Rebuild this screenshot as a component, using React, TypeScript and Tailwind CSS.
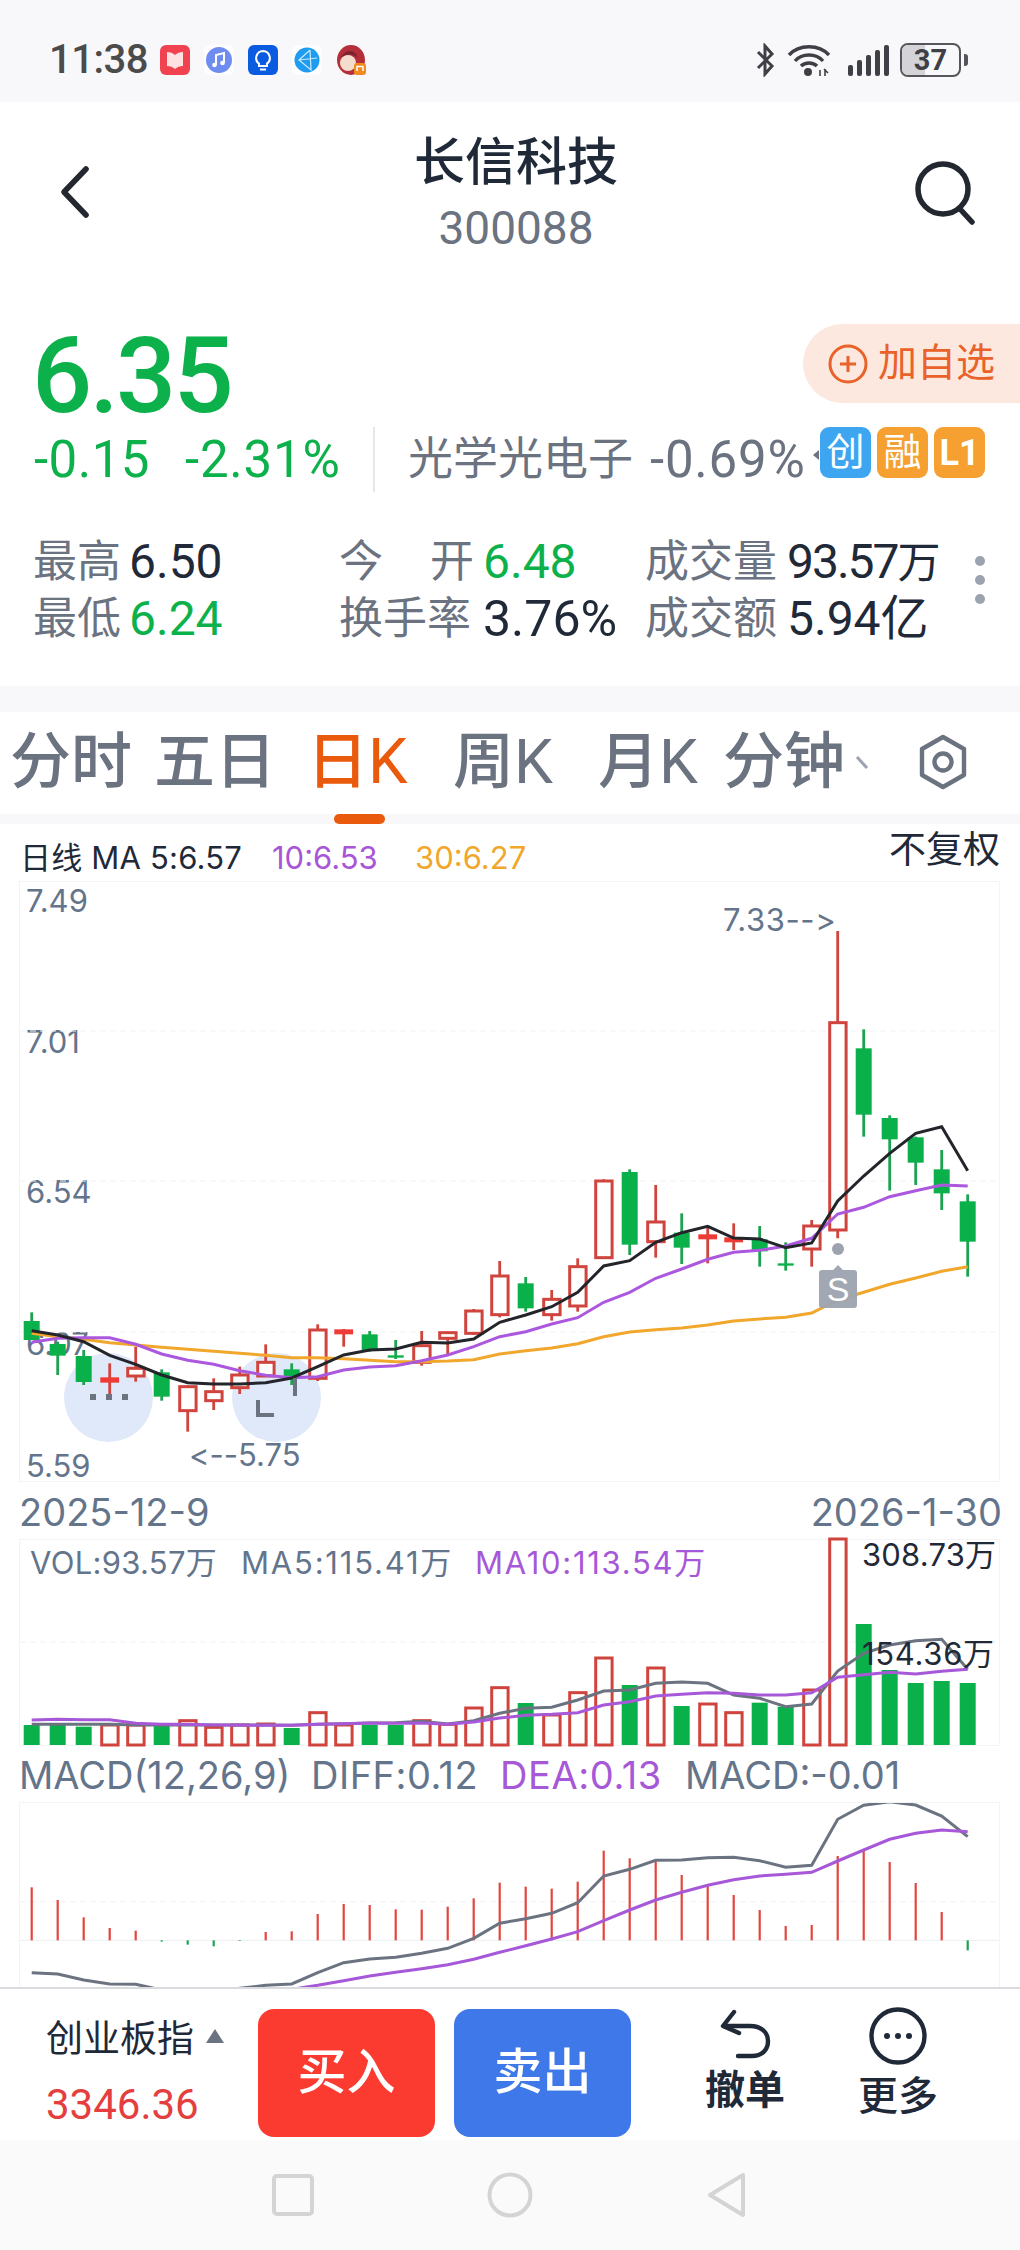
import React from 'react';

// all chart numbers are read off the screenshot, y is in "z" units: page y = base + z / 3
const kx = (i: number) => 31.7 + 26 * i;
const ky = (z: number) => 1120 + z / 3;
const vy = (z: number) => 1480 + z / 3;
const my = (z: number) => 1780 + z / 3;

type Candle = ['g' | 'h' | 'r', number, number, number, number];

const candles: Candle[] = [
  ['g', 577, 603, 660, 660],
  ['g', 665, 672, 707, 765],
  ['g', 690, 708, 786, 795],
  ['r', 730, 772, 788, 825],
  ['h', 680, 745, 768, 785],
  ['g', 748, 757, 830, 842],
  ['h', 797, 800, 872, 935],
  ['h', 775, 815, 842, 870],
  ['h', 740, 765, 803, 822],
  ['h', 673, 727, 768, 770],
  ['g', 730, 748, 770, 795],
  ['h', 613, 630, 775, 783],
  ['r', 627, 628, 643, 680],
  ['g', 633, 643, 690, 695],
  ['g', 660, 706, 713, 717],
  ['h', 633, 677, 727, 737],
  ['h', 635, 638, 655, 705],
  ['h', 567, 573, 640, 645],
  ['h', 423, 468, 584, 592],
  ['g', 471, 490, 565, 575],
  ['h', 510, 538, 584, 602],
  ['h', 415, 440, 558, 575],
  ['h', 178, 183, 413, 415],
  ['g', 148, 156, 374, 405],
  ['h', 195, 306, 365, 413],
  ['g', 280, 338, 383, 432],
  ['r', 318, 343, 358, 430],
  ['r', 310, 352, 367, 390],
  ['g', 318, 358, 394, 440],
  ['g', 367, 430, 437, 452],
  ['h', 300, 318, 387, 440],
  ['h', -567, -292, 330, 355],
  ['g', -272, -215, -16, 50],
  ['g', -14, -6, 58, 212],
  ['g', 50, 52, 128, 195],
  ['g', 90, 148, 220, 270],
  ['g', 223, 244, 365, 470],
];

const ma5 = [632, 645, 665, 706, 733, 765, 788, 792, 792, 788, 774, 740, 705, 690, 687, 667, 669, 657, 607, 585, 560, 517, 438, 422, 367, 338, 319, 354, 357, 383, 369, 243, 168, 100, 40, 20, 152];
const ma10 = [667, 655, 653, 653, 673, 702, 721, 733, 752, 766, 773, 770, 750, 741, 737, 722, 705, 680, 650, 635, 612, 593, 547, 517, 475, 447, 418, 397, 391, 378, 355, 282, 262, 230, 212, 195, 198];
const ma30 = [640, 650, 658, 668, 675, 682, 688, 694, 700, 706, 713, 713, 716, 721, 725, 725, 723, 719, 702, 692, 684, 671, 650, 636, 629, 624, 615, 603, 597, 592, 579, 540, 517, 493, 474, 454, 440];

const volTops = [735, 735, 740, 735, 735, 735, 722, 742, 735, 732, 744, 698, 735, 735, 735, 722, 733, 684, 623, 669, 705, 638, 534, 615, 564, 678, 672, 698, 668, 680, 630, 177, 432, 570, 609, 603, 609];
const volMa5 = [733, 733, 733, 733, 735, 735, 735, 735, 735, 735, 736, 733, 731, 729, 728, 724, 732, 722, 700, 685, 682, 660, 633, 630, 610, 606, 610, 645, 655, 680, 672, 573, 520, 495, 482, 478, 568];
const volMa10 = [720, 718, 719, 719, 730, 733, 733, 735, 735, 736, 736, 733, 731, 729, 730, 729, 733, 726, 714, 706, 703, 698, 675, 665, 648, 643, 638, 640, 645, 645, 638, 592, 584, 577, 582, 574, 568];

const macdBars = [322, 360, 412, 444, 452, 485, 494, 499, 483, 456, 454, 402, 372, 375, 388, 389, 380, 355, 308, 320, 326, 305, 212, 235, 245, 285, 315, 345, 390, 438, 435, 228, 212, 246, 309, 396, 511];
const diff = [578, 582, 600, 612, 613, 630, 640, 640, 625, 616, 612, 578, 548, 537, 532, 520, 505, 475, 430, 416, 400, 368, 288, 268, 241, 240, 233, 232, 242, 262, 256, 118, 76, 65, 75, 108, 170];
const dea = [700, 700, 700, 700, 700, 700, 700, 700, 690, 660, 628, 616, 602, 588, 577, 566, 554, 538, 517, 497, 477, 455, 422, 390, 360, 337, 316, 299, 288, 283, 277, 243, 210, 178, 160, 150, 155];

const line = (vals: number[], toY: (z: number) => number) =>
  vals.map((v, i) => `${kx(i).toFixed(1)},${toY(v).toFixed(1)}`).join(' ');

function StatusIcons() {
  return (
    <div className="flex items-center gap-[14px] ml-[12px]">
      <svg width="30" height="30" viewBox="0 0 30 30">
        <rect width="30" height="30" rx="6" fill="#f1434f" />
        <path d="M7 7 C10 7 13 8 15 10 C17 8 20 7 23 7 V21 C20 21 17 22 15 24 C13 22 10 21 7 21 Z" fill="#fde2e2" />
      </svg>
      <svg width="30" height="30" viewBox="0 0 30 30">
        <rect width="30" height="30" rx="6" fill="#fdfdff" />
        <circle cx="15" cy="15" r="13" fill="#6f8df0" />
        <path d="M12 20 V10 L20 8 V18" fill="none" stroke="#fff" strokeWidth="2" />
        <circle cx="10.5" cy="20" r="2.3" fill="#fff" />
        <circle cx="18.5" cy="18" r="2.3" fill="#fff" />
      </svg>
      <svg width="30" height="30" viewBox="0 0 30 30">
        <rect width="30" height="30" rx="6" fill="#0a5be0" />
        <path d="M15 6 a7 7 0 0 1 4 12.6 V21 h-8 v-2.4 A7 7 0 0 1 15 6 Z" fill="none" stroke="#fff" strokeWidth="2" />
        <path d="M12 24.5 h6" stroke="#fff" strokeWidth="2" />
      </svg>
      <svg width="30" height="30" viewBox="0 0 30 30">
        <rect width="30" height="30" rx="6" fill="#fdfdff" />
        <circle cx="15" cy="15" r="12.5" fill="#1e9df0" />
        <path d="M18 5 L7 15 L19 25 L18 5 M7 15 L25 13" fill="none" stroke="#cdeafc" strokeWidth="1.2" />
      </svg>
      <svg width="30" height="30" viewBox="0 0 30 30">
        <ellipse cx="15" cy="15" rx="14" ry="15" fill="#b52f3a" />
        <ellipse cx="12" cy="18" rx="8" ry="8" fill="#f4dccf" />
        <path d="M4 14 C8 8 18 8 22 14 L20 9 C16 4 8 5 4 14 Z" fill="#7a2430" />
        <rect x="18" y="18" width="12" height="12" rx="3" fill="#f28a1e" />
        <path d="M21 26 V21.5 H27 V26" fill="none" stroke="#fff" strokeWidth="1.5" />
      </svg>
    </div>
  );
}

function StatusRight() {
  return (
    <div className="flex items-center mr-[52px]">
      <svg width="24" height="34" viewBox="0 0 24 34" className="mr-[9px]">
        <path d="M4 9 L18 23 L11 31 V3 L18 11 L4 25" fill="none" stroke="#3f3f46" strokeWidth="3" />
      </svg>
      <svg width="44" height="34" viewBox="0 0 44 34" className="mr-[16px]">
        <path d="M2 12 C12 1 32 1 42 12" fill="none" stroke="#3f3f46" strokeWidth="3.4" />
        <path d="M8 18 C15 10 29 10 36 18" fill="none" stroke="#3f3f46" strokeWidth="3.4" />
        <path d="M14 23 C18 19 26 19 30 23" fill="none" stroke="#3f3f46" strokeWidth="3.4" />
        <circle cx="21" cy="29" r="4" fill="#3f3f46" />
        <path d="M33 27 V33 M38 33 V26 M37 26 L41 30" stroke="#3f3f46" strokeWidth="1.6" fill="none" />
      </svg>
      <svg width="42" height="34" viewBox="0 0 42 34" className="mr-[11px]">
        {[0, 1, 2, 3, 4].map((b) => (
          <rect key={b} x={1 + b * 9} y={22 - b * 5} width="5" height={11 + b * 5} rx="2" fill="#3f3f46" />
        ))}
      </svg>
      <div className="relative w-[61px] h-[34px] rounded-[8px] border-[2.5px] border-[#55555b] overflow-hidden flex items-center justify-center">
        <div className="absolute left-0 top-0 bottom-0 w-[23px] bg-[#d4d4d8]" />
        <span className="relative text-[29px] leading-none font-bold text-[#3f3f46]">37</span>
      </div>
      <div className="w-[4px] h-[12px] rounded-r-[3px] bg-[#55555b] ml-[3px]" />
    </div>
  );
}

function PageHeader() {
  return (
    <div className="relative h-[222px] bg-white">
      <svg width="34" height="56" viewBox="0 0 34 56" className="absolute left-[58px] top-[62px]">
        <path d="M28 5 L6 28 L28 51" fill="none" stroke="#23272f" strokeWidth="5.6" strokeLinecap="round" strokeLinejoin="round" />
      </svg>
      <div className="flex flex-col items-center pt-[32px]">
        <div className="text-[51px] leading-[58px] font-medium text-[#1f2937] ml-[12px]">长信科技</div>
        <div className="text-[46px] leading-[54px] mt-[9px] text-[#6b7280] ml-[12px]">300088</div>
      </div>
      <svg width="64" height="68" viewBox="0 0 64 68" className="absolute left-[913px] top-[55px]">
        <circle cx="30" cy="32" r="25" fill="none" stroke="#23272f" strokeWidth="5.5" />
        <path d="M47 52 L59 65" stroke="#23272f" strokeWidth="5.5" strokeLinecap="round" />
      </svg>
    </div>
  );
}

function Quote() {
  return (
    <div className="bg-white h-[362px]">
      <div className="h-[92px] flex items-start justify-between">
        <div className="ml-[32px] mt-[2px] text-[106px] leading-[100px] font-medium tracking-[-2.8px] text-[#0cb14b]">6.35</div>
        <div className="w-[217px] h-[79px] rounded-l-[40px] bg-[#fde8df] flex items-center pl-[25px]">
          <svg width="40" height="40" viewBox="0 0 40 40">
            <circle cx="20" cy="20" r="18" fill="none" stroke="#e8622a" strokeWidth="3" />
            <path d="M12 20 H28 M20 12 V28" stroke="#e8622a" strokeWidth="3" />
          </svg>
          <span className="ml-[10px] text-[39px] leading-none text-[#e8622a]">加自选</span>
        </div>
      </div>
      <div className="mt-[11px] h-[65px] flex items-center">
        <span className="ml-[34px] w-[151px] text-[51px] leading-none tracking-[0.5px] text-[#0cb14b]">-0.15</span>
        <span className="w-[188px] text-[51px] leading-none tracking-[0.8px] text-[#0cb14b]">-2.31%</span>
        <div className="w-[2px] h-[65px] bg-[#e5e7eb]" />
        <span className="ml-[33px] w-[242px] text-[45px] leading-none text-[#6b7280] whitespace-nowrap">光学光电子</span>
        <span className="w-[161px] text-[51px] leading-none tracking-[0.8px] text-[#6b7280] whitespace-nowrap">-0.69%</span>
        <svg width="9" height="12" viewBox="0 0 9 12" className="-mt-[10px]"><path d="M8 1 L2 6 L8 11 Z" fill="#6b7280" /></svg>
        <div className="flex gap-[6px] h-[51px] -mt-[14px]">
          <span className="w-[51px] rounded-[9px] bg-[#3ea6f0] text-white text-[38px] flex items-center justify-center">创</span>
          <span className="w-[51px] rounded-[9px] bg-[#f5a030] text-white text-[38px] flex items-center justify-center">融</span>
          <span className="w-[51px] rounded-[9px] bg-[#f5a030] text-white text-[36px] font-bold flex items-center justify-center">L1</span>
        </div>
      </div>
      <div className="relative mt-[42px] text-[44px] leading-[56px] text-[#6b7280]">
        <div className="flex">
          <span className="ml-[33px] w-[96px]">最高</span>
          <span className="w-[210px] text-[48px] text-[#1f2937]">6.50</span>
          <span className="w-[144px] flex justify-between pr-[9px]"><span>今</span><span>开</span></span>
          <span className="w-[162px] text-[48px] text-[#0cb14b]">6.48</span>
          <span className="w-[142px]">成交量</span>
          <span className="text-[48px] text-[#1f2937] tracking-[-2px]">93.57<span className="text-[43px] tracking-normal">万</span></span>
        </div>
        <div className="flex">
          <span className="ml-[33px] w-[96px]">最低</span>
          <span className="w-[210px] text-[48px] text-[#0cb14b]">6.24</span>
          <span className="w-[144px]">换手率</span>
          <span className="w-[162px] text-[50px] text-[#1f2937]">3.76%</span>
          <span className="w-[142px]">成交额</span>
          <span className="text-[48px] text-[#1f2937]">5.94亿</span>
        </div>
        <div className="absolute left-[975px] top-[22px] flex flex-col gap-[9px]">
          <div className="w-[10px] h-[10px] rounded-full bg-[#9ca3af]" />
          <div className="w-[10px] h-[10px] rounded-full bg-[#9ca3af]" />
          <div className="w-[10px] h-[10px] rounded-full bg-[#9ca3af]" />
        </div>
      </div>
    </div>
  );
}

function Tabs() {
  const cls = 'absolute top-[14px] text-[61px] leading-[72px] text-[#6b7280] font-medium whitespace-nowrap';
  return (
    <div className="relative h-[102px] bg-white overflow-hidden">
      <span className={`${cls} left-[10px]`}>分时</span>
      <span className={`${cls} left-[154px]`}>五日</span>
      <span className={`${cls} left-[307px] text-[#ea5a0c]`}>日<span className="font-normal text-[63px]">K</span></span>
      <span className={`${cls} left-[453px]`}>周<span className="font-normal text-[62px]">K</span></span>
      <span className={`${cls} left-[598px]`}>月<span className="font-normal text-[62px]">K</span></span>
      <span className={`${cls} left-[723px]`}>分钟</span>
      <svg width="14" height="18" viewBox="0 0 14 18" className="absolute left-[855px] top-[42px]">
        <path d="M2 3 L12 14" stroke="#9ca3af" strokeWidth="3" />
      </svg>
      <svg width="52" height="56" viewBox="0 0 52 56" className="absolute left-[917px] top-[22px]">
        <path d="M26 3 L47 15 V41 L26 53 L5 41 V15 Z" fill="none" stroke="#6b7280" strokeWidth="4.4" strokeLinejoin="round" />
        <circle cx="26" cy="28" r="8.5" fill="none" stroke="#6b7280" strokeWidth="4.4" />
      </svg>
    </div>
  );
}

function KChart() {
  const label = 'absolute left-[6px] text-[31px] leading-[34px] text-[#64748b]';
  return (
    <div className="relative ml-[19px] w-[981px] h-[601px] border border-[#f3f4f6] font-['Inter','Noto_Sans_CJK_SC',sans-serif] [font-feature-settings:'calt'_0,'liga'_0]">
      {/* hint bubbles and axis labels sit under the candles */}
      <div className="absolute left-[44px] top-[471px] w-[89px] h-[89px] rounded-full bg-[#dfe9fa]" />
      <div className="absolute left-[212px] top-[471px] w-[89px] h-[89px] rounded-full bg-[#dfe9fa]" />
      <span className={`${label} top-[2px]`}>7.49</span>
      <span className={`${label} top-[143px]`}>7.01</span>
      <span className={`${label} top-[293px]`}>6.54</span>
      <span className={`${label} top-[445px]`}>6.07</span>
      <span className={`${label} top-[567px]`}>5.59</span>
      <svg width="979" height="599" viewBox="20 882 979 599" className="absolute left-0 top-0 overflow-visible">
        {[1031, 1181, 1332].map((y) => (
          <line key={y} x1="20" x2="1000" y1={y} y2={y} stroke="#f1f2f4" strokeWidth="1" strokeDasharray="6 4" />
        ))}
        {candles.map(([t, wt, bt, bb, wb], i) => {
          const x = kx(i);
          const wick = t === 'g' ? '#1ca34f' : '#d0443e';
          return (
            <g key={i}>
              <line x1={x} x2={x} y1={ky(wt)} y2={ky(wb)} stroke={wick} strokeWidth="2.8" />
              {t === 'h' ? (
                <rect x={x - 8} y={ky(bt)} width="16.4" height={ky(bb) - ky(bt)} fill="#fff" stroke="#d0443e" strokeWidth="3" />
              ) : (
                <rect x={x - (t === 'g' ? 8 : 9.4)} y={ky(bt)} width={t === 'g' ? 16 : 18.8} height={ky(bb) - ky(bt)} fill={t === 'g' ? '#0ab14a' : '#ef3b35'} />
              )}
            </g>
          );
        })}
        <polyline points={line(ma30, ky)} fill="none" stroke="#f0a72c" strokeWidth="3" />
        <polyline points={line(ma10, ky)} fill="none" stroke="#ab58de" strokeWidth="3" />
        <polyline points={line(ma5, ky)} fill="none" stroke="#23252b" strokeWidth="3" />
        <path d="M819 1273 a3 3 0 0 1 3 -3 h11 l5 -5 l5 5 h11 a3 3 0 0 1 3 3 v32 a3 3 0 0 1 -3 3 h-32 a3 3 0 0 1 -3 -3 Z" fill="#9ca3af" fillOpacity="0.95" />
        <circle cx="838" cy="1249" r="6" fill="#9ca3af" />
        <path d="M90 1394 h6 v6 h-6 Z M106 1394 h6 v6 h-6 Z M122 1394 h6 v6 h-6 Z" fill="#6b7280" />
        <path d="M258 1400 V1415 H274 M295 1378 V1396" fill="none" stroke="#6b7280" strokeWidth="4" />
      </svg>
      <span className="absolute left-[703px] top-[21px] text-[31px] leading-[34px] tracking-[0.6px] text-[#64748b] whitespace-nowrap">7.33--&gt;</span>
      <span className="absolute left-[169px] top-[556px] text-[31px] leading-[34px] text-[#64748b] whitespace-nowrap">&lt;--5.75</span>
      <span className="absolute left-[799px] top-[387px] w-[38px] text-center text-[34px] leading-[40px] text-white font-['Liberation_Sans',sans-serif]">S</span>
    </div>
  );
}

function VolChart() {
  return (
    <div className="relative ml-[19px] w-[981px] h-[207px] border border-[#f3f4f6] font-['Inter','Noto_Sans_CJK_SC',sans-serif]">
      <svg width="979" height="205" viewBox="20 1540 979 205" className="absolute left-0 top-0 overflow-visible">
        <line x1="20" x2="1000" y1="1642" y2="1642" stroke="#f1f2f4" strokeDasharray="6 4" />
        {volTops.map((top, i) => {
          const hollow = candles[i][0] !== 'g';
          const x = kx(i);
          return hollow ? (
            <rect key={i} x={x - 8} y={vy(top)} width="16.4" height={1745 - vy(top)} fill="#fff" stroke="#d0443e" strokeWidth="3" />
          ) : (
            <rect key={i} x={x - 8} y={vy(top)} width="16" height={1745 - vy(top)} fill="#0ab14a" />
          );
        })}
        <polyline points={line(volMa5, vy)} fill="none" stroke="#6b7280" strokeWidth="3" />
        <polyline points={line(volMa10, vy)} fill="none" stroke="#a658d8" strokeWidth="3" />
      </svg>
      <span className="absolute left-[10px] top-[5px] text-[31px] leading-[36px] tracking-[0.3px] text-[#64748b] whitespace-nowrap">VOL:93.57万</span>
      <span className="absolute left-[221px] top-[5px] text-[31px] leading-[36px] tracking-[1.8px] text-[#64748b] whitespace-nowrap">MA5:115.41万</span>
      <span className="absolute left-[455px] top-[5px] text-[31px] leading-[36px] tracking-[1.7px] text-[#a658d8] whitespace-nowrap">MA10:113.54万</span>
      <span className="absolute left-[842px] top-[-3px] text-[31px] leading-[36px] tracking-[0.2px] text-[#1f2937] whitespace-nowrap">308.73万</span>
      <span className="absolute left-[842px] top-[96px] text-[31px] leading-[36px] tracking-[0.7px] text-[#1f2937] whitespace-nowrap">154.36万</span>
    </div>
  );
}

function MacdChart() {
  return (
    <div className="relative ml-[19px] w-[981px] h-[190px] border border-[#f3f4f6]">
      <svg width="979" height="188" viewBox="20 1803 979 188" className="absolute left-0 top-0">
        <line x1="20" x2="1000" y1={my(365)} y2={my(365)} stroke="#f1f2f4" strokeDasharray="6 4" />
        <line x1="20" x2="1000" y1={my(481)} y2={my(481)} stroke="#eceef0" />
        {macdBars.map((v, i) => (
          <line key={i} x1={kx(i)} x2={kx(i)} y1={my(481)} y2={my(v)} stroke={v > 481 ? '#1ca34f' : '#e2453e'} strokeWidth="2.2" />
        ))}
        <polyline points={line(diff, my)} fill="none" stroke="#6b7280" strokeWidth="3" />
        <polyline points={line(dea, my)} fill="none" stroke="#a658d8" strokeWidth="3" />
      </svg>
    </div>
  );
}

function ChartArea() {
  return (
    <div className="flex-1 bg-white overflow-hidden font-['Inter','Noto_Sans_CJK_SC',sans-serif]">
      <div className="h-[57px] relative">
        <span className="absolute left-[20px] top-[17px] text-[31px] leading-[34px] tracking-[0.2px] text-[#1f2937] whitespace-nowrap">日线 MA 5:6.57</span>
        <span className="absolute left-[272px] top-[17px] text-[31px] leading-[34px] text-[#a855d8] whitespace-nowrap">10:6.53</span>
        <span className="absolute left-[415px] top-[17px] text-[31px] leading-[34px] text-[#f0a72c] whitespace-nowrap">30:6.27</span>
        <span className="absolute left-[889px] top-[4px] text-[37px] leading-[44px] text-[#1f2937] whitespace-nowrap">不复权</span>
      </div>
      <KChart />
      <div className="h-[57px] flex items-center justify-between pl-[19px] pr-[18px] pt-[2px] text-[38px] leading-none text-[#64748b]">
        <span>2025-12-9</span>
        <span>2026-1-30</span>
      </div>
      <VolChart />
      <div className="h-[56px] flex items-center pl-[19px] pt-[2px] text-[38px] leading-none text-[#64748b] whitespace-nowrap">
        <span className="w-[292px]">MACD(12,26,9)</span>
        <span className="w-[189px] tracking-[0.5px]">DIFF:0.12</span>
        <span className="w-[185px] tracking-[0.6px] text-[#a658d8]">DEA:0.13</span>
        <span>MACD:-0.01</span>
      </div>
      <MacdChart />
    </div>
  );
}

function BottomBar() {
  return (
    <div className="relative h-[153px] bg-white border-t-[2px] border-[#d9dbde] shrink-0 flex">
      <div className="w-[258px] pl-[46px] pt-[28px]">
        <div className="flex items-center text-[37px] leading-[46px] text-[#1f2937]">
          <span>创业板指</span>
          <svg width="18" height="14" viewBox="0 0 18 14" className="ml-[12px] -mt-[8px]"><path d="M9 0 L18 14 H0 Z" fill="#6b7280" /></svg>
        </div>
        <div className="mt-[19px] text-[42px] leading-[46px] text-[#e53e3e]">3346.36</div>
      </div>
      <div className="mt-[20px] w-[177px] h-[128px] rounded-[16px] bg-[#fb3a30] flex items-center justify-center text-[49px] font-medium text-white">买入</div>
      <div className="mt-[20px] ml-[19px] w-[177px] h-[128px] rounded-[16px] bg-[#3f78e8] flex items-center justify-center text-[49px] font-medium text-white">卖出</div>
      <div className="w-[228px] flex flex-col items-center pt-[20px]">
        <svg width="54" height="50" viewBox="0 0 54 50">
          <path d="M16 3 L5 17 L21 24" fill="none" stroke="#1f2937" strokeWidth="4.4" strokeLinejoin="round" strokeLinecap="round" />
          <path d="M6 17 H32 C44 17 50 24 50 32 C50 41 44 47 34 47 H20" fill="none" stroke="#1f2937" strokeWidth="4.4" strokeLinecap="round" />
        </svg>
        <span className="mt-[4px] text-[40px] leading-[56px] font-bold text-[#1f2937]">撤单</span>
      </div>
      <div className="w-[78px] flex flex-col items-center pt-[18px]">
        <svg width="58" height="58" viewBox="0 0 58 58" className="shrink-0">
          <circle cx="29" cy="29" r="26.5" fill="none" stroke="#1f2937" strokeWidth="4.4" />
          <circle cx="18" cy="29" r="3" fill="#1f2937" />
          <circle cx="29" cy="29" r="3" fill="#1f2937" />
          <circle cx="40" cy="29" r="3" fill="#1f2937" />
        </svg>
        <span className="mt-[4px] text-[40px] leading-[56px] font-medium text-[#1f2937] whitespace-nowrap">更多</span>
      </div>
    </div>
  );
}

function NavBar() {
  return (
    <div className="h-[110px] bg-[#fafafa] shrink-0 flex items-center justify-center gap-[173px]">
      <svg width="42" height="42" viewBox="0 0 42 42">
        <rect x="2" y="2" width="38" height="38" rx="3" fill="none" stroke="#d4d4d4" strokeWidth="4" />
      </svg>
      <svg width="46" height="46" viewBox="0 0 46 46">
        <circle cx="23" cy="23" r="20.5" fill="none" stroke="#d4d4d4" strokeWidth="4" />
      </svg>
      <svg width="42" height="46" viewBox="0 0 42 46">
        <path d="M37 3 L4 23 L37 43 Z" fill="none" stroke="#d4d4d4" strokeWidth="4" strokeLinejoin="round" />
      </svg>
    </div>
  );
}

export default function App() {
  return (
    <div className="w-[1020px] h-[2250px] flex flex-col overflow-hidden bg-white font-['Roboto','Noto_Sans_CJK_SC',sans-serif]">
      <div className="h-[102px] shrink-0 bg-[#f8f8fa] flex items-center justify-between pt-[18px]">
        <div className="flex items-center pl-[49px]">
          <span className="text-[40px] leading-none font-medium text-[#4b4b4b] tracking-[-0.5px]">11:38</span>
          <StatusIcons />
        </div>
        <StatusRight />
      </div>
      <PageHeader />
      <Quote />
      <div className="h-[26px] shrink-0 bg-[#f8f8fa]" />
      <Tabs />
      <div className="h-[10px] shrink-0 bg-[#f8f8fa]">
        <div className="ml-[334px] w-[51px] h-[10px] rounded-[5px] bg-[#ea5a0c]" />
      </div>
      <ChartArea />
      <BottomBar />
      <NavBar />
    </div>
  );
}
